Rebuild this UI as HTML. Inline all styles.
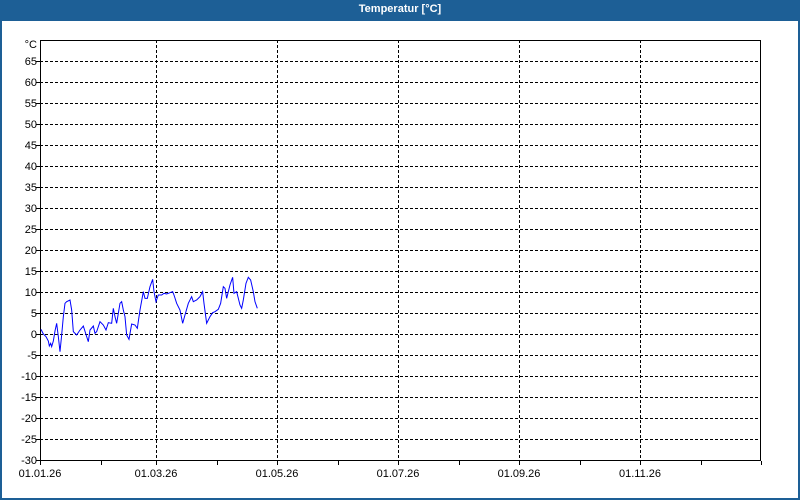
<!DOCTYPE html>
<html><head><meta charset="utf-8"><style>
html,body{margin:0;padding:0;background:#fff;}
body{width:800px;height:500px;position:relative;overflow:hidden;font-family:"Liberation Sans",sans-serif;}
.frame{position:absolute;left:0;top:0;width:800px;height:500px;box-sizing:border-box;border:2px solid #1d5f96;border-top:none;}
.title{position:absolute;left:0;top:0;width:800px;height:21px;background:#1d5f96;color:#fff;font-weight:bold;font-size:11px;text-align:center;line-height:19px;}
svg text{font-family:"Liberation Sans",sans-serif;font-size:11px;fill:#000;}
</style></head><body>
<div class="frame"></div>
<div class="title">Temperatur [°C]</div>
<svg width="800" height="500" style="position:absolute;left:0;top:0">
<g stroke="#000" stroke-width="1" stroke-dasharray="3,2" fill="none" shape-rendering="crispEdges">
<path d="M40 61.5H761M40 82.5H761M40 103.5H761M40 124.5H761M40 145.5H761M40 166.5H761M40 187.5H761M40 208.5H761M40 229.5H761M40 250.5H761M40 271.5H761M40 292.5H761M40 313.5H761M40 334.5H761M40 355.5H761M40 376.5H761M40 397.5H761M40 418.5H761M40 439.5H761"/>
<path d="M156.5 40V461M277.5 40V461M398.5 40V461M519.5 40V461M640.5 40V461"/>
</g>
<g stroke="#000" stroke-width="1" fill="none" shape-rendering="crispEdges">
<rect x="40.5" y="40.5" width="720" height="420"/>
<path d="M36 61.5H40M36 82.5H40M36 103.5H40M36 124.5H40M36 145.5H40M36 166.5H40M36 187.5H40M36 208.5H40M36 229.5H40M36 250.5H40M36 271.5H40M36 292.5H40M36 313.5H40M36 334.5H40M36 355.5H40M36 376.5H40M36 397.5H40M36 418.5H40M36 439.5H40M36 460.5H40"/>
<path d="M40.5 461V465M101.5 461V465M156.5 461V465M217.5 461V465M277.5 461V465M338.5 461V465M398.5 461V465M459.5 461V465M519.5 461V465M580.5 461V465M640.5 461V465M701.5 461V465M761.5 461V465"/>
</g>
<g text-anchor="end">
<text x="37" y="48">°C</text>
<text x="37" y="65">65</text><text x="37" y="86">60</text><text x="37" y="107">55</text><text x="37" y="128">50</text><text x="37" y="149">45</text><text x="37" y="170">40</text><text x="37" y="191">35</text><text x="37" y="212">30</text><text x="37" y="233">25</text><text x="37" y="254">20</text><text x="37" y="275">15</text><text x="37" y="296">10</text><text x="37" y="317">5</text><text x="37" y="338">0</text><text x="37" y="359">-5</text><text x="37" y="380">-10</text><text x="37" y="401">-15</text><text x="37" y="422">-20</text><text x="37" y="443">-25</text><text x="37" y="464">-30</text>
</g>
<g text-anchor="middle">
<text x="40" y="477">01.01.26</text><text x="156" y="477">01.03.26</text><text x="277" y="477">01.05.26</text><text x="398" y="477">01.07.26</text><text x="519" y="477">01.09.26</text><text x="640" y="477">01.11.26</text>
</g>
<g transform="translate(30,270) scale(0.3333)">
<polyline fill="none" stroke="#0000ff" stroke-width="1" vector-effect="non-scaling-stroke" points="33,178 40,192 48,200 55,213 58,228 62,220 65,230 70,213 75,183 80,160 85,200 90,245 95,195 100,140 105,100 110,95 120,90 125,120 130,185 140,195 150,180 160,168 170,200 175,215 180,180 190,168 195,190 200,185 210,155 220,165 228,180 235,158 245,160 250,115 255,140 260,160 270,100 275,95 280,120 285,140 290,195 297,208 305,162 315,165 322,175 330,120 340,65 345,85 352,85 360,50 368,28 372,65 378,95 385,75 395,75 402,70 410,72 420,68 428,65 432,75 440,100 450,120 458,160 465,135 475,100 485,80 490,95 500,90 510,80 518,65 522,100 530,160 540,140 548,128 555,125 565,118 572,100 580,50 585,55 590,85 600,45 608,22 612,70 620,65 630,105 635,115 640,90 648,40 655,22 662,30 670,65 675,95 682,115"/>
</g>
</svg>
</body></html>
